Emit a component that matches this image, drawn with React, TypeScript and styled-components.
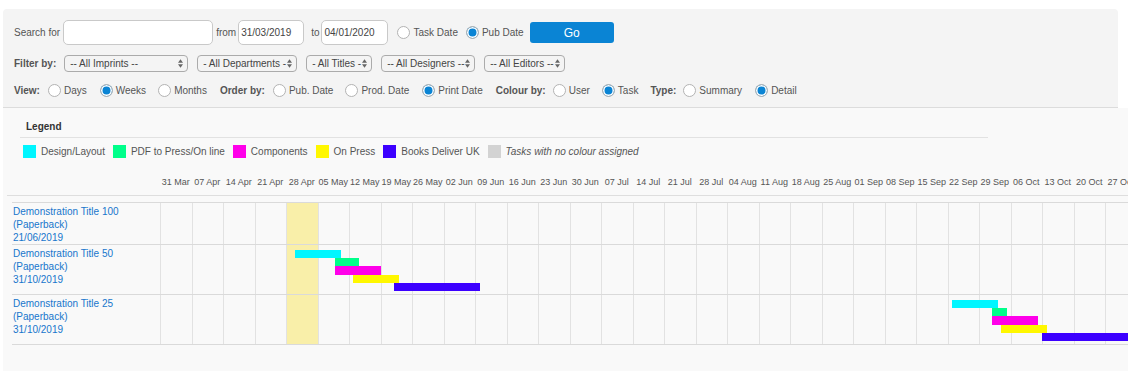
import React from "react";
import styled, { createGlobalStyle } from "styled-components";

const GlobalStyle = createGlobalStyle`
  html, body { margin: 0; padding: 0; background: #ffffff; }
  body {
    font-family: "Liberation Sans", Arial, Helvetica, sans-serif;
    font-size: 10px;
    color: #555555;
  }
`;

const Page = styled.div`
  padding: 9px 0 0 3px;
  width: 1127px;
`;

/* ---------- filter panel ---------- */

const FilterPanel = styled.section`
  width: 1115px;
  box-sizing: border-box;
  background: #f4f4f4;
  border-radius: 4px 4px 0 0;
  border-bottom: 1px solid #dcdcdc;
  padding: 11px 11px 10px;
  display: flex;
  flex-direction: column;
`;

const Row = styled.div<{ $h: number; $mt?: number }>`
  display: flex;
  align-items: center;
  height: ${(p) => p.$h}px;
  margin-top: ${(p) => p.$mt ?? 0}px;
`;

const Text = styled.span<{ $ml?: number }>`
  margin-left: ${(p) => p.$ml ?? 0}px;
  line-height: 12px;
  white-space: nowrap;
  color: #555;
`;

const BoldLabel = styled.span<{ $ml?: number }>`
  margin-left: ${(p) => p.$ml ?? 0}px;
  font-weight: bold;
  line-height: 12px;
  white-space: nowrap;
  color: #555;
`;

const TextInput = styled.input<{ $w: number; $ml?: number }>`
  width: ${(p) => p.$w}px;
  margin: 0 0 0 ${(p) => p.$ml ?? 0}px;
  height: 25px;
  box-sizing: border-box;
  border: 1px solid #c9c9c9;
  border-radius: 5px;
  background: #fff;
  padding: 0 2px;
  font-family: "Liberation Sans", Arial, sans-serif;
  font-size: 10px;
  color: #444;
  outline: none;
`;

const Option = styled.label<{ $ml?: number }>`
  display: flex;
  align-items: center;
  gap: 2px;
  margin-left: ${(p) => p.$ml ?? 0}px;
  white-space: nowrap;
  color: #555;
  line-height: 12px;
`;

const Radio = styled.input.attrs({ type: "radio" })`
  appearance: none;
  -webkit-appearance: none;
  width: 13px;
  height: 13px;
  margin: 0 1px 0 0;
  border: 1px solid #b3b3b3;
  border-radius: 50%;
  background: #ffffff;
  box-sizing: border-box;
  &:checked {
    background: #0a84d4;
    box-shadow: inset 0 0 0 1.5px #ffffff;
  }
`;

const GoButton = styled.button<{ $ml?: number }>`
  margin-left: ${(p) => p.$ml ?? 0}px;
  width: 84px;
  height: 21px;
  border: none;
  border-radius: 3px;
  background: #0a84d4;
  color: #ffffff;
  font-family: "Liberation Sans", Arial, sans-serif;
  font-size: 12px;
  padding: 0;
`;

const SelectWrap = styled.span<{ $w: number; $ml?: number }>`
  position: relative;
  display: inline-block;
  width: ${(p) => p.$w}px;
  margin-left: ${(p) => p.$ml ?? 0}px;
  height: 17px;
`;

const Select = styled.select`
  appearance: none;
  -webkit-appearance: none;
  width: 100%;
  height: 17px;
  box-sizing: border-box;
  border: 1px solid #ababab;
  border-radius: 4px;
  background: transparent;
  padding: 0 8px 0 5px;
  font-family: "Liberation Sans", Arial, sans-serif;
  font-size: 10px;
  color: #444;
  outline: none;
`;

const Arrows = styled.svg`
  position: absolute;
  right: 5px;
  top: 4px;
  width: 5px;
  height: 9px;
  pointer-events: none;
`;

const Dropdown: React.FC<{ w: number; ml?: number; label: string }> = ({ w, ml, label }) => (
  <SelectWrap $w={w} $ml={ml}>
    <Select defaultValue={label}>
      <option>{label}</option>
    </Select>
    <Arrows viewBox="0 0 6 10">
      <path d="M3 0 L6 4 H0 Z M3 10 L0 6 H6 Z" fill="#666" />
    </Arrows>
  </SelectWrap>
);

/* ---------- board (legend + chart) ---------- */

const Board = styled.section`
  width: 1125px;
  background: #f9f9f9;
  overflow: hidden;
  padding-bottom: 26px;
`;

const Legend = styled.div`
  margin-left: 17px;
  width: 968px;
`;

const LegendTitle = styled.div`
  padding: 13px 0 4px 6px;
  font-weight: bold;
  line-height: 12px;
  color: #333;
  border-bottom: 1px solid #e2e2e2;
`;

const LegendItems = styled.div`
  display: flex;
  align-items: center;
  margin-top: 7px;
  padding-left: 3px;
  height: 13px;
`;

const LegendItem = styled.div`
  display: flex;
  align-items: center;
  gap: 5px;
  margin-right: 8px;
  white-space: nowrap;
  color: #555;
`;

const Swatch = styled.span<{ $c: string }>`
  width: 13px;
  height: 13px;
  background: ${(p) => p.$c};
  flex: none;
`;

const ItalicText = styled.span`
  font-style: italic;
`;

const ChartHeader = styled.div`
  display: flex;
  margin: 18px 0 0 4px;
  padding: 0 0 7px 153px;
  border-bottom: 1px solid #dedede;
  line-height: 12px;
`;

const WeekLabel = styled.span`
  flex: none;
  width: 31.5px;
  text-align: center;
  white-space: nowrap;
  font-size: 9px;
  color: #555;
`;

const Gantt = styled.div`
  margin: 6px 0 0 9px;
  border-bottom: 1px solid #dadada;
`;

const GanttRow = styled.div`
  display: flex;
  border-top: 1px solid #dadada;
`;

const TitleCell = styled.div`
  flex: none;
  width: 147px;
  padding: 2px 0 0 1px;
  line-height: 13px;
  color: #1776cc;
  white-space: nowrap;
`;

const Timeline = styled.div`
  flex: none;
  display: grid;
  width: 976.5px;
`;

const Columns = styled.div`
  grid-area: 1 / 1;
  display: flex;
`;

const WeekCell = styled.div<{ $hl?: boolean }>`
  flex: none;
  width: 31.5px;
  box-sizing: border-box;
  border-left: 1px solid #e2e2e2;
  background: ${(p) => (p.$hl ? "#f9efa9" : "transparent")};
`;

const BarStack = styled.div`
  grid-area: 1 / 1;
  display: flex;
  flex-direction: column;
  align-items: flex-start;
  padding: 5px 0 3px;
`;

const Bar = styled.div<{ $c: string }>`
  height: 8.2px;
  background: ${(p) => p.$c};
`;

/* ---------- data ---------- */

const COLORS = {
  design: "#00f6ff",
  pdf: "#00ff8a",
  comp: "#ff00ea",
  press: "#fff700",
  deliver: "#3c00ff",
  none: "#d3d3d3",
};

const WEEKS = [
  "31 Mar", "07 Apr", "14 Apr", "21 Apr", "28 Apr", "05 May", "12 May", "19 May",
  "26 May", "02 Jun", "09 Jun", "16 Jun", "23 Jun", "30 Jun", "07 Jul", "14 Jul",
  "21 Jul", "28 Jul", "04 Aug", "11 Aug", "18 Aug", "25 Aug", "01 Sep", "08 Sep",
  "15 Sep", "22 Sep", "29 Sep", "06 Oct", "13 Oct", "20 Oct", "27 Oct",
];

const PX_PER_DAY = 4.5;
const HIGHLIGHT = 4;

type Task = { color: string; start: number; days: number };
type Title = { name: string; format: string; date: string; tasks: Task[] };

const TITLES: Title[] = [
  { name: "Demonstration Title 100", format: "(Paperback)", date: "21/06/2019", tasks: [] },
  {
    name: "Demonstration Title 50",
    format: "(Paperback)",
    date: "31/10/2019",
    tasks: [
      { color: COLORS.design, start: 30, days: 10.2 },
      { color: COLORS.pdf, start: 38.9, days: 5.3 },
      { color: COLORS.comp, start: 38.9, days: 10.2 },
      { color: COLORS.press, start: 42.9, days: 10.2 },
      { color: COLORS.deliver, start: 52.1, days: 19.1 },
    ],
  },
  {
    name: "Demonstration Title 25",
    format: "(Paperback)",
    date: "31/10/2019",
    tasks: [
      { color: COLORS.design, start: 176, days: 10.2 },
      { color: COLORS.pdf, start: 184.9, days: 3.3 },
      { color: COLORS.comp, start: 184.9, days: 10.2 },
      { color: COLORS.press, start: 186.9, days: 10.2 },
      { color: COLORS.deliver, start: 196, days: 19.1 },
    ],
  },
];

const LEGEND = [
  { c: COLORS.design, t: "Design/Layout" },
  { c: COLORS.pdf, t: "PDF to Press/On line" },
  { c: COLORS.comp, t: "Components" },
  { c: COLORS.press, t: "On Press" },
  { c: COLORS.deliver, t: "Books Deliver UK" },
];

const App: React.FC = () => (
  <>
    <GlobalStyle />
    <Page>
      <FilterPanel>
        <Row $h={25}>
          <Text>Search for</Text>
          <TextInput $w={150} $ml={3} defaultValue="" />
          <Text $ml={3}>from</Text>
          <TextInput $w={66} $ml={2} defaultValue="31/03/2019" />
          <Text $ml={7}>to</Text>
          <TextInput $w={67} $ml={2} defaultValue="04/01/2020" />
          <Option $ml={9}>
            <Radio name="dt" />
            Task Date
          </Option>
          <Option $ml={8}>
            <Radio name="dt" defaultChecked />
            Pub Date
          </Option>
          <GoButton $ml={6}>Go</GoButton>
        </Row>
        <Row $h={17} $mt={10}>
          <BoldLabel>Filter by:</BoldLabel>
          <Dropdown w={124} ml={8} label="-- All Imprints --" />
          <Dropdown w={100} ml={9} label="- All Departments -" />
          <Dropdown w={66} ml={9} label="- All Titles -" />
          <Dropdown w={94} ml={9} label="-- All Designers --" />
          <Dropdown w={81} ml={9} label="-- All Editors --" />
        </Row>
        <Row $h={13} $mt={12}>
          <BoldLabel>View:</BoldLabel>
          <Option $ml={8}><Radio name="view" />Days</Option>
          <Option $ml={13}><Radio name="view" defaultChecked />Weeks</Option>
          <Option $ml={12}><Radio name="view" />Months</Option>
          <BoldLabel $ml={13}>Order by:</BoldLabel>
          <Option $ml={8}><Radio name="order" />Pub. Date</Option>
          <Option $ml={12}><Radio name="order" />Prod. Date</Option>
          <Option $ml={13}><Radio name="order" defaultChecked />Print Date</Option>
          <BoldLabel $ml={13}>Colour by:</BoldLabel>
          <Option $ml={7}><Radio name="colour" />User</Option>
          <Option $ml={12}><Radio name="colour" defaultChecked />Task</Option>
          <BoldLabel $ml={12}>Type:</BoldLabel>
          <Option $ml={7}><Radio name="type" />Summary</Option>
          <Option $ml={13}><Radio name="type" defaultChecked />Detail</Option>
        </Row>
      </FilterPanel>

      <Board>
        <Legend>
          <LegendTitle>Legend</LegendTitle>
          <LegendItems>
            {LEGEND.map((l) => (
              <LegendItem key={l.t}>
                <Swatch $c={l.c} />
                {l.t}
              </LegendItem>
            ))}
            <LegendItem>
              <Swatch $c={COLORS.none} />
              <ItalicText>Tasks with no colour assigned</ItalicText>
            </LegendItem>
          </LegendItems>
        </Legend>

        <ChartHeader>
          {WEEKS.map((w) => (
            <WeekLabel key={w}>{w}</WeekLabel>
          ))}
        </ChartHeader>

        <Gantt>
          {TITLES.map((t) => (
            <GanttRow key={t.name}>
              <TitleCell>
                {t.name}
                <br />
                {t.format}
                <br />
                {t.date}
              </TitleCell>
              <Timeline>
                <Columns>
                  {WEEKS.map((w, i) => (
                    <WeekCell key={w} $hl={i === HIGHLIGHT} />
                  ))}
                </Columns>
                {t.tasks.length > 0 && (
                  <BarStack>
                    {t.tasks.map((task, i) => (
                      <Bar
                        key={i}
                        $c={task.color}
                        style={{
                          marginLeft: task.start * PX_PER_DAY,
                          width: task.days * PX_PER_DAY,
                        }}
                      />
                    ))}
                  </BarStack>
                )}
              </Timeline>
            </GanttRow>
          ))}
        </Gantt>
      </Board>
    </Page>
  </>
);

export default App;
